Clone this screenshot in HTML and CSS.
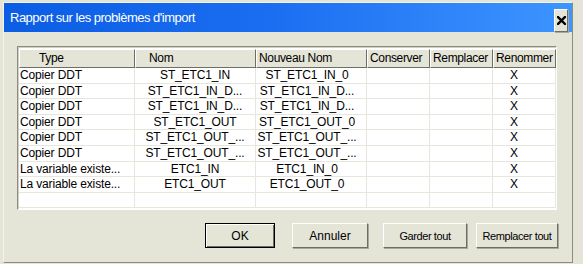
FILE: index.html
```html
<!DOCTYPE html>
<html lang="fr">
<head>
    <meta charset="UTF-8">
    <title>Rapport sur les problèmes d'import</title>
    <link rel="stylesheet" href="styles.css">
</head>
<body>
    <div class="window">
        <div class="titlebar">
            <span class="title">Rapport sur les problèmes d'import</span>
            <button class="close">
                <svg width="9" height="9" viewBox="0 0 9 9">
                    <path d="M1 1 L8 8 M8 1 L1 8" stroke="#000" stroke-width="2.4" stroke-linecap="square"/>
                </svg>
            </button>
        </div>

        <div class="list">
            <div class="row head">
                <div class="hcell c-type">Type</div>
                <div class="hcell c-nom">Nom</div>
                <div class="hcell c-new">Nouveau Nom</div>
                <div class="hcell c-keep">Conserver</div>
                <div class="hcell c-repl">Remplacer</div>
                <div class="hcell c-ren">Renommer</div>
            </div>
            <div id="rows"></div>
        </div>

        <div class="buttons">
            <button class="btn ok">OK</button>
            <button class="btn cancel">Annuler</button>
            <button class="btn keep small">Garder tout</button>
            <button class="btn replace small">Remplacer tout</button>
        </div>
    </div>

    <script>
        const items = [
            ['Copier DDT', 'ST_ETC1_IN', 'ST_ETC1_IN_0', '', '', 'X'],
            ['Copier DDT', 'ST_ETC1_IN_D...', 'ST_ETC1_IN_D...', '', '', 'X'],
            ['Copier DDT', 'ST_ETC1_IN_D...', 'ST_ETC1_IN_D...', '', '', 'X'],
            ['Copier DDT', 'ST_ETC1_OUT', 'ST_ETC1_OUT_0', '', '', 'X'],
            ['Copier DDT', 'ST_ETC1_OUT_...', 'ST_ETC1_OUT_...', '', '', 'X'],
            ['Copier DDT', 'ST_ETC1_OUT_...', 'ST_ETC1_OUT_...', '', '', 'X'],
            ['La variable existe...', 'ETC1_IN', 'ETC1_IN_0', '', '', 'X'],
            ['La variable existe...', 'ETC1_OUT', 'ETC1_OUT_0', '', '', 'X'],
            ['', '', '', '', '', '']
        ];
        const cols = ['c-type', 'c-nom', 'c-new', 'c-keep', 'c-repl', 'c-ren'];

        const rows = document.getElementById('rows');
        items.forEach(item => {
            const row = document.createElement('div');
            row.className = 'row';
            item.forEach((text, i) => {
                const cell = document.createElement('div');
                cell.className = 'cell ' + cols[i];
                cell.textContent = text;
                row.appendChild(cell);
            });
            rows.appendChild(row);
        });
    </script>
</body>
</html>
```

FILE: styles.css
```css
body {
    margin: 0;
    background: #e4e4d7;
    font-family: "Liberation Sans", Arial, sans-serif;
    font-size: 12px;
    color: #000;
}

.window {
    margin: 2px 0 0 3px;
    width: 568px;
    height: 259px;
    border-top: 1px solid #f4f4ee;
    border-left: 1px solid #f4f4ee;
    border-right: 1px solid #8c8c84;
    border-bottom: 1px solid #8c8c84;
    background: #e4e4d7;
}

.titlebar {
    height: 29px;
    display: flex;
    align-items: center;
    justify-content: space-between;
    padding: 0 4px 0 6px;
    background: linear-gradient(90deg, #0b5ee4 0%, #1a6cf0 45%, #3d95ff 100%);
    box-sizing: border-box;
}

.title {
    color: #fff;
    font-size: 13px;
    letter-spacing: -0.5px;
}

.close {
    width: 14px;
    height: 23px;
    margin-top: 5px;
    padding: 0;
    display: flex;
    align-items: center;
    justify-content: center;
    background: #e4e4d7;
    border: 1px solid;
    border-color: #fff #6e6e66 #6e6e66 #fff;
    box-shadow: 1px 1px 0 #a8a89c;
}

.list {
    margin: 14px 0 0 13px;
    width: 540px;
    height: 164px;
    box-sizing: border-box;
    border: 1px solid;
    border-color: #8c8c84 #fff #fff #8c8c84;
    box-shadow: inset 1px 1px 0 #cfcfc4;
    background: #fff;
    padding: 2px 0 0 1px;
    overflow: hidden;
}

.row {
    display: grid;
    grid-template-columns: 116px 121px 111px 63px 63px 63px;
    height: 15.6px;
    line-height: 15px;
    white-space: nowrap;
    letter-spacing: -0.15px;
}

.row.head {
    height: 19px;
    line-height: 17px;
    background: #e4e4d7;
    letter-spacing: -0.35px;
}

.hcell {
    border: 1px solid;
    border-color: #fff #6e6e66 #6e6e66 #fff;
    background: #e4e4d7;
    padding-left: 2px;
    overflow: hidden;
}

.hcell.c-type {
    padding-left: 19px;
}

.hcell.c-nom {
    padding-left: 13px;
}

.cell {
    border-right: 1px solid #e6e6dc;
    border-bottom: 1px solid #e6e6dc;
    overflow: hidden;
    text-align: center;
}

.cell.c-type {
    text-align: left;
    padding-left: 1px;
}

.cell.c-new {
    padding-right: 8px;
}

.cell.c-ren {
    text-align: left;
    padding-left: 17px;
}

.buttons {
    display: flex;
    justify-content: flex-end;
    align-items: center;
    margin: 13px 14px 0 0;
}

.btn {
    height: 25px;
    padding: 0;
    font-family: "Liberation Sans", Arial, sans-serif;
    font-size: 12px;
    color: #000;
    background: #e4e4d7;
    border: 1px solid;
    border-color: #fff #6e6e66 #6e6e66 #fff;
    box-shadow: 1px 1px 0 #a8a89c;
}

.btn.ok {
    width: 70px;
    margin-right: 17px;
    border: 1px solid #000;
    box-shadow: inset 1px 1px 0 #fff, inset -1px -1px 0 #6e6e66;
}

.btn.cancel {
    width: 76px;
    margin-right: 15px;
}

.btn.keep {
    width: 84px;
    margin-right: 9px;
}

.btn.replace {
    width: 82px;
}

.btn.small {
    font-size: 11px;
    letter-spacing: -0.4px;
}
```
